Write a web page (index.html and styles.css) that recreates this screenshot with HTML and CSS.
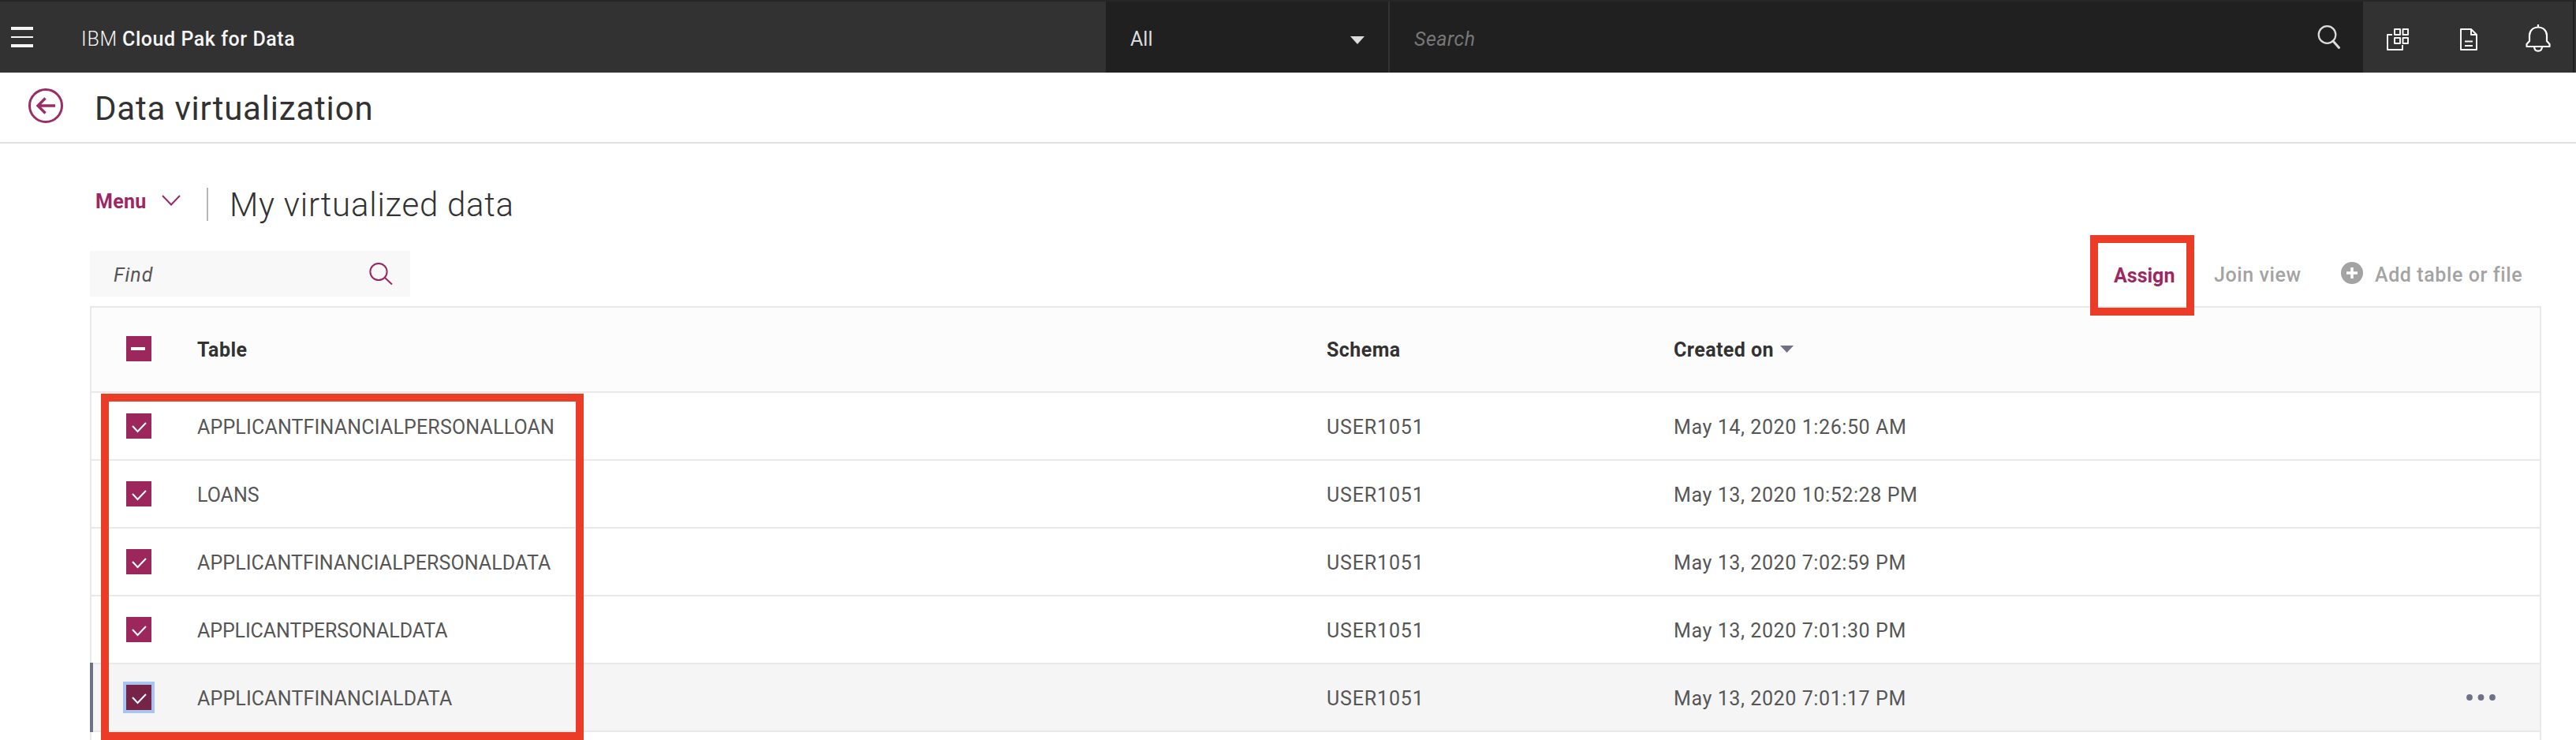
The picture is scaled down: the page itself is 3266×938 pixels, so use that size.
FILE: index.html
```html
<!DOCTYPE html>
<html lang="en">
<head>
<meta charset="utf-8">
<title>Data virtualization</title>
<link rel="stylesheet" href="styles.css">
</head>
<body>
<header class="topbar">
  <div class="brand-area">
    <svg class="menu-icon" width="28" height="26" viewBox="0 0 28 26"><path d="M0 0h28v4H0zM0 12h28v2H0zM0 22h28v4H0z" fill="#f5f5f5"/></svg>
    <div class="brand"><span class="t brand-ibm">IBM</span><span class="t brand-name">Cloud Pak for Data</span></div>
  </div>
  <div class="scope"><span class="t scope-label">All</span>
    <svg class="caret" width="18" height="10" viewBox="0 0 18 10"><path d="M0 0h18L9 10z" fill="#dcdcdc"/></svg>
  </div>
  <div class="search"><span class="t search-label">Search</span>
    <svg width="30" height="32" viewBox="0 0 30 32" fill="none" stroke="#dcdcdc"><circle cx="12.500" cy="13" r="10.800" stroke-width="2.200"/><path d="M20 21l7.500 8.500" stroke-width="3" stroke-linecap="round"/></svg>
  </div>
  <div class="tools">
    <svg class="tool-apps" width="28" height="28" viewBox="0 0 28 28" fill="none" stroke="#f5f5f5" stroke-width="2" stroke-linejoin="round"><path d="M10 1h7v7h-7zM20.500 1H27v7h-6.500zM10 12h7v7h-7zM20.500 12H27v7h-6.500z"/><path d="M7 8H1v19h19v-6"/></svg>
    <svg class="tool-doc" width="22" height="28" viewBox="0 0 22 28" fill="none" stroke="#f5f5f5" stroke-width="2" stroke-linejoin="round"><path d="M1 1h13l7 7v19H1zM14 1v7h7M6 16.500h10M6 22h10"/></svg>
    <svg class="tool-bell" width="32" height="35" viewBox="0 0 32 35" fill="none" stroke="#fff" stroke-width="2.200" stroke-linejoin="round"><path d="M16 0v4M16 3.500C9 3.500 5 8.500 5 14v7l-3.500 4v3h29v-3L27 21v-7C27 8.500 23 3.500 16 3.500zM11 28.500c.3 3.500 2.300 5.200 5 5.200s4.700-1.700 5-5.200"/></svg>
  </div>
</header>
<div class="page-head">
  <svg width="44" height="44" viewBox="0 0 44 44" fill="none" stroke="#9b2d66" stroke-width="3"><circle cx="22" cy="22" r="20.500"/><path d="M34 22H12M21.500 12.500L12 22l9.500 9.500" stroke-width="3.400"/></svg>
  <h1 class="t page-title">Data virtualization</h1>
</div>
<main class="content">
  <div class="section-head">
    <span class="t menu-label">Menu</span>
    <svg class="chevron" width="24" height="14" viewBox="0 0 24 14" fill="none" stroke="#9b2763" stroke-width="2"><path d="M1 1l11 11.500L23 1"/></svg>
    <span class="rule"></span>
    <h2 class="t section-title">My virtualized data</h2>
  </div>
  <div class="toolbar">
    <div class="find"><span class="t find-label">Find</span>
      <svg width="30" height="28" viewBox="0 0 30 28" fill="none" stroke="#9b2763" stroke-width="2"><circle cx="12" cy="11.500" r="10.600"/><path d="M20 19l9 8.500"/></svg>
    </div>
    <div class="assign"><span class="t assign-label">Assign</span></div>
    <span class="t join-label">Join view</span>
    <svg class="plus" width="28" height="28" viewBox="0 0 28 28"><circle cx="14" cy="14" r="14" fill="#a3a3a3"/><path d="M14 7v14M7 14h14" stroke="#fff" stroke-width="3.500"/></svg>
    <span class="t add-label">Add table or file</span>
  </div>
  <div class="table">
    <div class="row head">
      <span class="box"><svg width="32" height="32"><path d="M6 14h18v4H6z" fill="#fff"/></svg></span>
      <span class="t h-table">Table</span><span class="t h-schema">Schema</span>
      <span class="created"><span class="t h-created">Created on</span><svg class="sort" width="17" height="9" viewBox="0 0 17 9"><path d="M0 0h17L8.500 9z" fill="#6f7187"/></svg></span>
    </div>
    <div class="row"><span class="box"><svg width="32" height="32"><path class="tick" d="M8 16l6.500 7L25 12"/></svg></span><span class="t name-loan">APPLICANTFINANCIALPERSONALLOAN</span><span class="t user">USER1051</span><span class="t date">May 14, 2020 1:26:50 AM</span></div>
    <div class="row"><span class="box"><svg width="32" height="32"><path class="tick" d="M8 16l6.500 7L25 12"/></svg></span><span class="t">LOANS</span><span class="t user">USER1051</span><span class="t date">May 13, 2020 10:52:28 PM</span></div>
    <div class="row"><span class="box"><svg width="32" height="32"><path class="tick" d="M8 16l6.500 7L25 12"/></svg></span><span class="t name-finper">APPLICANTFINANCIALPERSONALDATA</span><span class="t user">USER1051</span><span class="t date">May 13, 2020 7:02:59 PM</span></div>
    <div class="row"><span class="box"><svg width="32" height="32"><path class="tick" d="M8 16l6.500 7L25 12"/></svg></span><span class="t name-per">APPLICANTPERSONALDATA</span><span class="t user">USER1051</span><span class="t date">May 13, 2020 7:01:30 PM</span></div>
    <div class="row active"><span class="box focus"><svg width="32" height="32"><path class="tick" d="M8 16l6.500 7L25 12"/></svg></span><span class="t name-fin">APPLICANTFINANCIALDATA</span><span class="t user">USER1051</span><span class="t date">May 13, 2020 7:01:17 PM</span>
      <svg class="more" width="37" height="8" viewBox="0 0 37 8" fill="#6f7187"><circle cx="4" cy="4" r="3.900"/><circle cx="18.500" cy="4" r="3.900"/><circle cx="33" cy="4" r="3.900"/></svg></div>
    <div class="highlight"></div>
  </div>
</main>
</body>
</html>
```
FILE: styles.css
```css
* { box-sizing: border-box; }
html { height: 938px; overflow: hidden; }
body { margin: 0; width: 3266px; height: 938px; overflow: hidden; background: #fff; color: #323232; font: 400 25px/34px Roboto, "Open Sans", sans-serif; }
svg { display: block; flex: none; }
h1, h2 { margin: 0; font-weight: 400; }
.t { white-space: nowrap; }

.topbar { display: flex; height: 92px; background: #323232; border-top: 2px solid #262626; }
.brand-area { width: 1402px; display: flex; align-items: center; padding-left: 14px; }
.brand { display: flex; gap: 6px; margin-left: 61px; padding-top: 5px; color: #f5f5f5; letter-spacing: 0.55px; }
.brand-ibm { font-weight: 300; letter-spacing: 0.8px; }
.brand-name { font-weight: 500; }
.scope { width: 358px; background: #202020; display: flex; align-items: center; justify-content: space-between; padding: 5px 30px 0 31px; color: #dcdcdc; }
.caret { margin-top: 3px; }
.search { width: 1236px; background: #202020; border-left: 2px solid #323232; display: flex; align-items: center; justify-content: space-between; padding: 0 28px 0 31px; color: #777; font-style: italic; }
.search-label { padding-top: 5px; letter-spacing: 0.5px; }
.tools { flex: 1; display: flex; align-items: center; padding: 6px 0 0 30px; border-right: 2px solid #202020; margin-right: 2px; }
.tool-doc { margin-left: 65px; }
.tool-bell { margin: 0 0 4px 61px; }

.page-head { height: 90px; display: flex; align-items: center; padding: 0 0 4px 36px; border-bottom: 2px solid #e0e0e0; }
.page-title { margin-left: 40px; padding-top: 7px; font-size: 42px; line-height: 50px; letter-spacing: 0.8px; }

.content { padding: 56px 44px 0 114px; }
.section-head { display: flex; align-items: center; height: 42px; padding-left: 7px; }
.menu-label { width: 63px; margin-bottom: 7px; color: #9b2763; font-weight: 700; letter-spacing: 0.3px; }
.chevron { margin: 0 33px 10px 21px; }
.rule { width: 2px; height: 42px; background: #b5b5b5; }
.section-title { margin-left: 27px; padding-top: 2px; font-size: 42px; font-weight: 300; line-height: 42px; letter-spacing: 0.75px; }

.toolbar { display: flex; align-items: center; height: 58px; margin: 38px 0 12px; color: #a3a3a3; font-weight: 500; }
.find { width: 406px; height: 58px; background: #f8f8f8; display: flex; justify-content: space-between; align-items: center; padding: 0 22px 0 30px; font-style: italic; font-weight: 400; color: #565656; }
.find-label { padding-top: 4px; letter-spacing: 1px; }
.assign { position: relative; z-index: 2; width: 132px; height: 102px; margin: 4px 0 0 2130px; border: 10px solid #eb3c27; display: flex; align-items: center; padding: 1px 0 0 20px; color: #9b2763; font-weight: 700; }
.join-label { margin-left: 25px; width: 110px; padding-top: 4px; letter-spacing: 0.6px; }
.plus { margin: 0 15px 2px 51px; }
.add-label { padding-top: 4px; letter-spacing: 0.6px; }

.table { position: relative; height: 550px; border: 2px solid #e9e9e9; border-bottom: 0; }
.row { position: relative; height: 86px; display: grid; grid-template-columns: 90px 1432px 440px 1fr auto; align-items: center; padding-left: 44px; border-bottom: 2px solid #e9e9e9; color: #565656; }
.row > .t, .created { padding-top: 3px; }
.head { height: 108px; padding-bottom: 2px; background: #fcfcfc; color: #323232; font-weight: 700; letter-spacing: 0.45px; }
.created { display: flex; align-items: center; gap: 8px; }
.sort { margin-bottom: 3px; }
.user { letter-spacing: 0.85px; }
.date { letter-spacing: 0.6px; }
.name-loan { letter-spacing: 0.17px; }
.name-finper { letter-spacing: 0.1px; }
.name-per { letter-spacing: -0.1px; }
.name-fin { letter-spacing: 0.15px; }
.box { width: 32px; height: 32px; background: #9b275d; }
.tick { fill: none; stroke: #fff; stroke-width: 2; }
.active { background: #f5f5f5; }
.active::before { content: ""; position: absolute; left: -2px; top: -2px; width: 4px; height: 88px; background: #6f7187; }
.focus { background: #752447; box-shadow: 0 0 0 4px #a8c5f2; }
.more { margin-right: 56px; }
.highlight { position: absolute; left: 12px; top: 109px; width: 612px; height: 439px; border: 10px solid #eb3c27; }
```
